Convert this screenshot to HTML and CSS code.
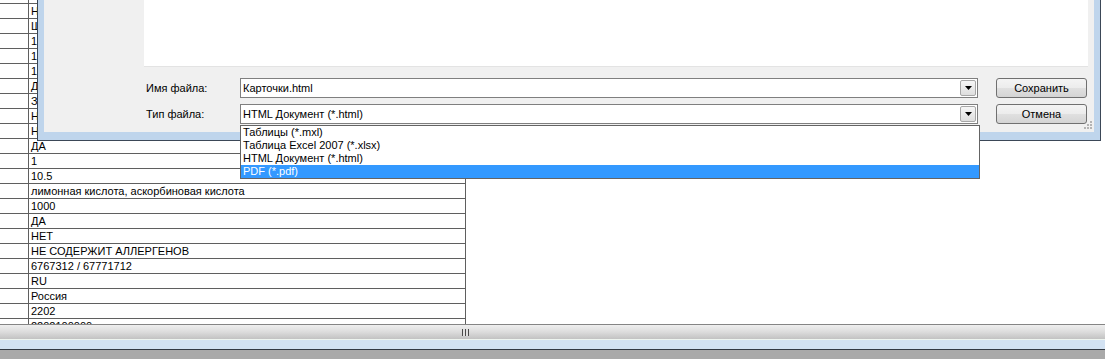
FILE: index.html
```html
<!DOCTYPE html>
<html lang="ru">
<head>
    <meta charset="UTF-8">
    <title>Сохранение файла</title>
    <link rel="stylesheet" href="styles.css">
</head>
<body>
    <div class="app">
        <div class="sheet">
            <div class="grid">
                <div class="row"><div class="num"></div><div class="cell"></div></div>
                <div class="row"><div class="num"></div><div class="cell">Нектар яблочный осветленный</div></div>
                <div class="row"><div class="num"></div><div class="cell">Шт</div></div>
                <div class="row"><div class="num"></div><div class="cell">1</div></div>
                <div class="row"><div class="num"></div><div class="cell">1</div></div>
                <div class="row"><div class="num"></div><div class="cell">12</div></div>
                <div class="row"><div class="num"></div><div class="cell">ДА</div></div>
                <div class="row"><div class="num"></div><div class="cell">Здоровье</div></div>
                <div class="row"><div class="num"></div><div class="cell">НЕТ</div></div>
                <div class="row"><div class="num"></div><div class="cell">НЕТ</div></div>
                <div class="row"><div class="num"></div><div class="cell">ДА</div></div>
                <div class="row"><div class="num"></div><div class="cell">1</div></div>
                <div class="row"><div class="num"></div><div class="cell">10.5</div></div>
                <div class="row"><div class="num"></div><div class="cell">лимонная кислота, аскорбиновая кислота</div></div>
                <div class="row"><div class="num"></div><div class="cell">1000</div></div>
                <div class="row"><div class="num"></div><div class="cell">ДА</div></div>
                <div class="row"><div class="num"></div><div class="cell">НЕТ</div></div>
                <div class="row"><div class="num"></div><div class="cell">НЕ СОДЕРЖИТ АЛЛЕРГЕНОВ</div></div>
                <div class="row"><div class="num"></div><div class="cell">6767312 / 67771712</div></div>
                <div class="row"><div class="num"></div><div class="cell">RU</div></div>
                <div class="row"><div class="num"></div><div class="cell">Россия</div></div>
                <div class="row"><div class="num"></div><div class="cell">2202</div></div>
                <div class="row"><div class="num"></div><div class="cell">2202100000</div></div>
            </div>

            <!-- save dialog over the sheet -->
            <div class="dialog">
                <div class="dialog-body">
                    <div class="file-list"></div>
                    <div class="form">
                        <label class="label">Имя файла:</label>
                        <div class="combo">
                            <span class="combo-text">Карточки.html</span>
                            <span class="arrow"><svg width="7" height="4" viewBox="0 0 7 4"><path d="M0 0H7L3.5 4Z" fill="#000"/></svg></span>
                        </div>
                        <button class="btn">Сохранить</button>

                        <label class="label">Тип файла:</label>
                        <div class="combo">
                            <span class="combo-text">HTML Документ (*.html)</span>
                            <span class="arrow"><svg width="7" height="4" viewBox="0 0 7 4"><path d="M0 0H7L3.5 4Z" fill="#000"/></svg></span>
                            <ul class="dropdown">
                                <li>Таблицы (*.mxl)</li>
                                <li>Таблица Excel 2007 (*.xlsx)</li>
                                <li>HTML Документ (*.html)</li>
                                <li class="selected">PDF (*.pdf)</li>
                            </ul>
                        </div>
                        <button class="btn">Отмена</button>
                    </div>
                    <svg class="resize-grip" width="11" height="11" viewBox="0 0 11 11">
                        <g fill="#b4b4b4">
                            <rect x="9" y="1" width="2" height="2"/>
                            <rect x="6" y="4" width="2" height="2"/>
                            <rect x="9" y="4" width="2" height="2"/>
                            <rect x="3" y="7" width="2" height="2"/>
                            <rect x="6" y="7" width="2" height="2"/>
                            <rect x="9" y="7" width="2" height="2"/>
                        </g>
                    </svg>
                </div>
            </div>
        </div>

        <div class="hscroll"><span class="grip"></span></div>
        <div class="band"></div>
        <div class="taskbar"></div>
    </div>
</body>
</html>
```

FILE: styles.css
```css
* {
    margin: 0;
    padding: 0;
    box-sizing: border-box;
}

body {
    width: 1105px;
    height: 359px;
    overflow: hidden;
    background-color: #fff;
    color: #000;
    font-family: "Liberation Sans", Arial, sans-serif;
    font-size: 11px;
}

.app {
    display: flex;
    flex-direction: column;
    height: 359px;
}

/* spreadsheet behind the dialog */
.sheet {
    position: relative;
    height: 324px;
    flex: none;
    overflow: hidden;
}

.grid {
    width: 466px;
    margin-top: -11px;
}

.row {
    display: grid;
    grid-template-columns: 28px 1fr;
    height: 15px;
    border-bottom: 1px solid #5f5f5f;
}

.cell {
    border-left: 1px solid #5f5f5f;
    border-right: 1px solid #5f5f5f;
    padding-left: 2px;
    line-height: 14px;
    white-space: nowrap;
    overflow: hidden;
}

/* dialog window */
.dialog {
    position: absolute;
    left: 37px;
    top: -59px;
    width: 1064px;
    height: 200px;
    border: 1px solid #3b4757;
    background-color: #bfd5ec;
    padding: 0 6px 8px 6px;
}

.dialog-body {
    position: relative;
    height: 100%;
    background-color: #f0f0f0;
}

.file-list {
    margin-left: 100px;
    width: 944px;
    height: 125px;
    background-color: #fff;
    border-bottom: 1px solid #e3e3e3;
}

.form {
    display: grid;
    grid-template-columns: 76px 738px 91px;
    grid-auto-rows: 20px;
    column-gap: 18px;
    row-gap: 6px;
    margin: 11px 0 0 102px;
}

.label {
    line-height: 20px;
}

.combo {
    position: relative;
    display: flex;
    align-items: center;
    border: 1px solid #7f7f7f;
    background-color: #fff;
}

.combo-text {
    flex: 1;
    padding-left: 2px;
}

.arrow {
    display: flex;
    align-items: center;
    justify-content: center;
    width: 16px;
    height: 16px;
    margin-right: 1px;
    border: 1px solid #a7a7a7;
    border-radius: 2px;
    background: linear-gradient(#f6f6f6, #dedede);
}

.dropdown {
    position: absolute;
    left: -1px;
    top: 20px;
    width: 740px;
    list-style: none;
    background-color: #fff;
    border: 1px solid #646464;
    z-index: 2;
}

.dropdown li {
    height: 13px;
    line-height: 13px;
    padding-left: 2px;
}

.dropdown li.selected {
    background-color: #3399ff;
    color: #fff;
}

.btn {
    font-family: "Liberation Sans", Arial, sans-serif;
    font-size: 11px;
    color: #000;
    border: 1px solid #707070;
    border-radius: 3px;
    background: linear-gradient(#f4f4f4 0%, #ececec 50%, #e0e0e0 51%, #d4d4d4 100%);
}

.resize-grip {
    position: absolute;
    right: 2px;
    bottom: 1px;
}

/* bottom bars */
.hscroll {
    position: relative;
    height: 15px;
    flex: none;
    border-top: 1px solid #858585;
    background: linear-gradient(#efefef, #dcdcdc 50%, #c2c2c2);
}

.grip {
    position: absolute;
    left: 462px;
    top: 4px;
    width: 7px;
    height: 7px;
    background: repeating-linear-gradient(90deg, #4a4a4a 0 1px, #e0e0e0 1px 3px);
}

.band {
    height: 10px;
    flex: none;
    border-top: 1px solid #eef5f0;
    background-color: #d3e2f2;
}

.taskbar {
    flex: 1;
    border-top: 1px solid #343a43;
    background-color: #a9a9a9;
}
```
